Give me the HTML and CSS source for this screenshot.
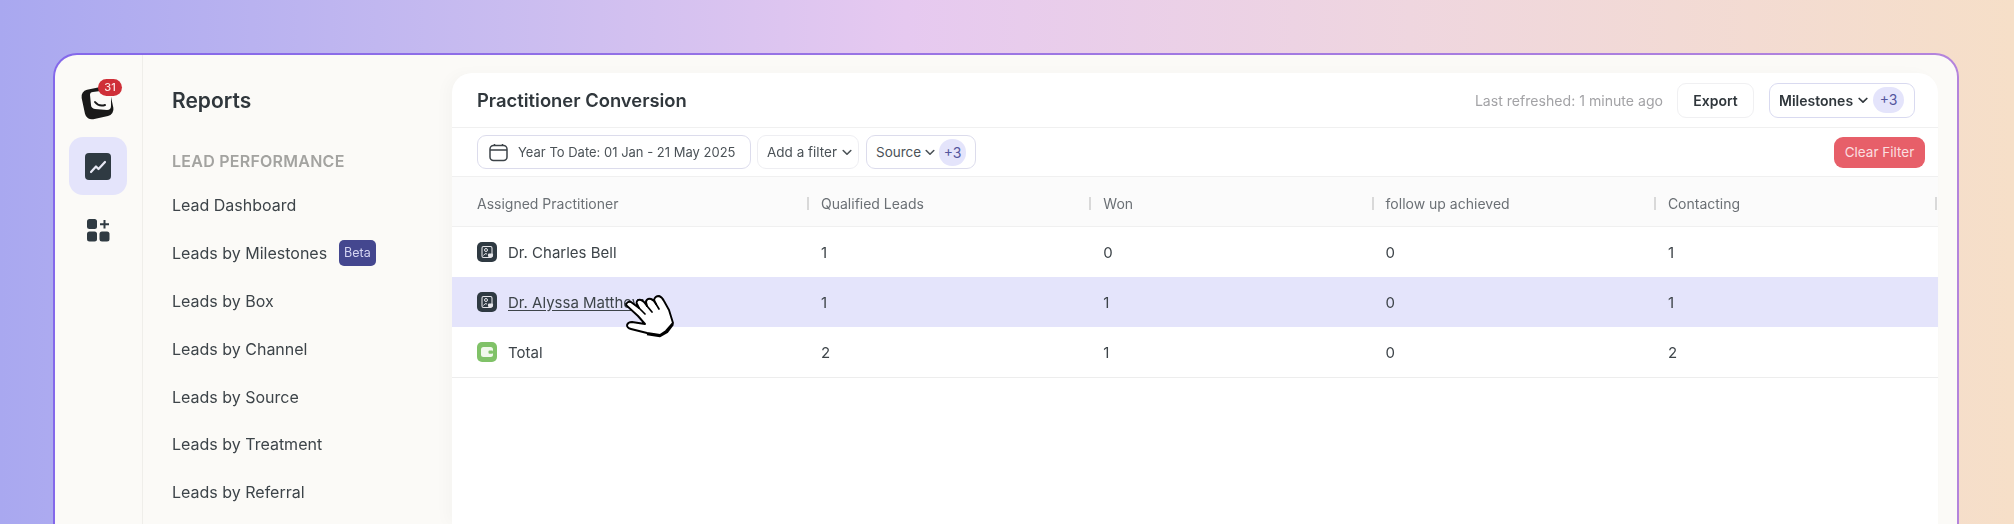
FILE: index.html
```html
<!DOCTYPE html>
<html lang="en">
<head>
    <meta charset="UTF-8">
    <title>Practitioner Conversion</title>
    <link rel="stylesheet" href="styles.css">
</head>
<body>

    <div class="window">
        <div class="rail">
            <div class="logo">
                <svg width="36" height="38" viewBox="0 0 36 38">
                    <rect x="3" y="4" width="29" height="30" rx="7" fill="#191919" transform="rotate(-12 17 19)"/>
                    <path d="M10 11 Q10 8 13 8 L28 6 Q31 6 31 9 L31 22 Q31 26 27 26 L15 25 Q11 24 11 21 Z" fill="#fbfaf7"/>
                    <path d="M15 18 Q19 23 25 21" fill="none" stroke="#191919" stroke-width="2" stroke-linecap="round"/>
                </svg>
                <span class="logo-badge">31</span>
            </div>
            <div class="rail-item active">
                <svg width="26" height="27" viewBox="0 0 26 27">
                    <rect width="26" height="27" rx="4" fill="#2f3a42"/>
                    <path d="M6 19 L11 13.5 L13.5 16 L20 9" fill="none" stroke="#e8e8f4" stroke-width="2.2" stroke-linecap="round" stroke-linejoin="round"/>
                </svg>
            </div>
            <div class="rail-item">
                <svg width="23" height="23" viewBox="0 0 23 23" fill="#2f3a42">
                    <rect x="0" y="0" width="10" height="10" rx="2.5"/>
                    <rect x="0" y="12.5" width="10" height="10" rx="2.5"/>
                    <rect x="12.5" y="12.5" width="10" height="10" rx="2.5"/>
                    <path d="M16.5 1 h2 v3.2 h3.5 v2 h-3.5 v3.3 h-2 v-3.3 h-3.5 v-2 h3.5 z"/>
                </svg>
            </div>
        </div>

        <div class="nav">
            <h2>Reports</h2>
            <div class="nav-group">LEAD PERFORMANCE</div>
            <a class="nav-item">Lead Dashboard</a>
            <a class="nav-item">Leads by Milestones <span class="beta">Beta</span></a>
            <a class="nav-item">Leads by Box</a>
            <a class="nav-item">Leads by Channel</a>
            <a class="nav-item">Leads by Source</a>
            <a class="nav-item">Leads by Treatment</a>
            <a class="nav-item">Leads by Referral</a>
        </div>

        <div class="panel">
            <div class="panel-head">
                <h1>Practitioner Conversion</h1>
                <div class="panel-actions">
                    <span class="refreshed">Last refreshed: 1 minute ago</span>
                    <button class="btn export">Export</button>
                    <button class="btn milestones">Milestones
                        <svg class="chev" width="10" height="7" viewBox="0 0 10 7"><path d="M1.2 1.5 L5 5.2 L8.8 1.5" fill="none" stroke="currentColor" stroke-width="1.7" stroke-linecap="round" stroke-linejoin="round"/></svg>
                        <span class="count">+3</span>
                    </button>
                </div>
            </div>

            <div class="filters">
                <button class="chip date">
                    <svg width="19" height="19" viewBox="0 0 19 19" fill="none" stroke="#3c4348" stroke-width="1.5">
                        <rect x="1" y="2.5" width="17" height="15" rx="3.5"/>
                        <path d="M1 7 H18 M5.5 1 V3 M13.5 1 V3"/>
                    </svg>
                    Year To Date: 01 Jan - 21 May 2025
                </button>
                <button class="chip add">Add a filter
                    <svg class="chev" width="10" height="7" viewBox="0 0 10 7"><path d="M1.2 1.5 L5 5.2 L8.8 1.5" fill="none" stroke="currentColor" stroke-width="1.6" stroke-linecap="round" stroke-linejoin="round"/></svg>
                </button>
                <button class="chip source">Source
                    <svg class="chev" width="10" height="7" viewBox="0 0 10 7"><path d="M1.2 1.5 L5 5.2 L8.8 1.5" fill="none" stroke="currentColor" stroke-width="1.6" stroke-linecap="round" stroke-linejoin="round"/></svg>
                    <span class="count">+3</span>
                </button>
                <button class="clear">Clear Filter</button>
            </div>

            <div class="row head">
                <div class="cell">Assigned Practitioner</div>
                <div class="cell">Qualified Leads</div>
                <div class="cell">Won</div>
                <div class="cell">follow up achieved</div>
                <div class="cell">Contacting</div>
            </div>

            <div class="row">
                <div class="cell">
                    <svg class="avatar" viewBox="0 0 20 20"><rect width="20" height="20" rx="5" fill="#2f3a42"/><rect x="5" y="4.5" width="10" height="11" rx="1.5" fill="none" stroke="#e6e6ea" stroke-width="1.1"/><circle cx="9" cy="8" r="1.5" fill="none" stroke="#e6e6ea" stroke-width="1"/><path d="M6.5 13.5 Q8 10.5 10 12" fill="none" stroke="#e6e6ea" stroke-width="1"/><rect x="11" y="11.5" width="5" height="3.5" rx="1" fill="#e6e6ea"/></svg>
                    Dr. Charles Bell
                </div>
                <div class="cell">1</div>
                <div class="cell">0</div>
                <div class="cell">0</div>
                <div class="cell">1</div>
            </div>
            <div class="row hover">
                <div class="cell">
                    <svg class="avatar" viewBox="0 0 20 20"><rect width="20" height="20" rx="5" fill="#2f3a42"/><rect x="5" y="4.5" width="10" height="11" rx="1.5" fill="none" stroke="#e6e6ea" stroke-width="1.1"/><circle cx="9" cy="8" r="1.5" fill="none" stroke="#e6e6ea" stroke-width="1"/><path d="M6.5 13.5 Q8 10.5 10 12" fill="none" stroke="#e6e6ea" stroke-width="1"/><rect x="11" y="11.5" width="5" height="3.5" rx="1" fill="#e6e6ea"/></svg>
                    <a class="name-link">Dr. Alyssa Matthews</a>
                    <svg class="hand" width="52" height="44" viewBox="-2 -2 52 44">
                        <path d="M1 9 Q2 5 6 6 L14 12 L11.5 7 Q12 3 16 4 Q19 5 22 10 L21 6 Q22 2 26 3 Q29 4 31 8 L29 4 Q30 0 34 0 Q37 1 39 5 L44 14 L48 27 L41 35 L35 39 L22 37 L6 33 Q2 32 2 29 Q3 26 7 26 L20 28 L13 20 Z" fill="#fff" stroke="#000" stroke-width="1.9" stroke-linejoin="round"/>
                        <path d="M14 12 L20 18 M22 10 L27 16 M31 8 L34 13" stroke="#000" stroke-width="1.7" stroke-linecap="round"/>
                        <path d="M22 38 L35 40 L42 36 L48 28" fill="none" stroke="#000" stroke-width="2.4" stroke-linejoin="round"/>
                    </svg>
                </div>
                <div class="cell">1</div>
                <div class="cell">1</div>
                <div class="cell">0</div>
                <div class="cell">1</div>
            </div>
            <div class="row total">
                <div class="cell">
                    <svg class="avatar" viewBox="0 0 20 20"><rect width="20" height="20" rx="5" fill="#80c268"/><rect x="4" y="5" width="12" height="10" rx="2.5" fill="#f1f8ec"/><rect x="11.5" y="8.5" width="4.5" height="3.2" rx="1" fill="#80c268"/></svg>
                    Total
                </div>
                <div class="cell">2</div>
                <div class="cell">1</div>
                <div class="cell">0</div>
                <div class="cell">2</div>
            </div>
        </div>
    </div>

</body>
</html>
```

FILE: styles.css
```css
*{
    box-sizing: border-box;
}
html, body{
    width: 100%;
    height: 100%;
    overflow: hidden;
    padding: 0;
    margin: 0;
}

body{
    padding: 53px 55px 0 53px;
    font-family: Inter, 'Noto Sans', sans-serif;
    color: #3a4146;
    background: linear-gradient(90deg, #a9a8f0 0%, #c9bcf0 25%, #e6c9f0 45%, #efd6df 70%, #f6dfc8 100%);
}

button{
    font-family: inherit;
    cursor: pointer;
    white-space: nowrap;
}
svg{
    flex: none;
}

.window{
    display: flex;
    height: 100%;
    background: linear-gradient(#fbfaf7, #fbfaf7) padding-box, linear-gradient(90deg, #8468ea, #b484dc) border-box;
    border: 2px solid transparent;
    border-bottom: 0;
    border-radius: 24px 24px 0 0;
    overflow: hidden;
    filter: blur(.35px);
}

.rail{
    width: 88px;
    flex: none;
    display: flex;
    flex-direction: column;
    align-items: center;
    padding-top: 29px;
    padding-right: 1px;
    border-right: 1px solid #efeeea;
}
.logo{
    position: relative;
    width: 36px;
    height: 38px;
    margin-bottom: 15px;
}
.logo-badge{
    position: absolute;
    top: -5px;
    left: 18px;
    width: 24px;
    height: 17px;
    border-radius: 9px;
    background: #cf2f38;
    color: #fbe4e4;
    font-size: 11px;
    font-weight: 500;
    line-height: 17px;
    text-align: center;
}
.rail-item{
    display: flex;
    align-items: center;
    justify-content: center;
    width: 58px;
    height: 58px;
    border-radius: 14px;
}
.rail-item.active{
    background: #e4e4fb;
    margin-bottom: 6px;
}

.nav{
    width: 309px;
    flex: none;
    padding: 0 0 0 29px;
}
.nav h2{
    margin: 33px 0 0;
    font-size: 21px;
    line-height: 26px;
    font-weight: 600;
    color: #30373c;
}
.nav-group{
    margin-top: 35px;
    margin-bottom: 8px;
    font-size: 16px;
    line-height: 24px;
    font-weight: 600;
    letter-spacing: .25px;
    color: #a3a3a0;
}
.nav-item{
    display: flex;
    align-items: center;
    gap: 12px;
    height: 47.9px;
    font-size: 16px;
    font-weight: 400;
    color: #3d4449;
}
.beta{
    padding: 0 5px;
    height: 26px;
    line-height: 26px;
    border-radius: 5px;
    background: #44478f;
    color: #d5d5f2;
    font-size: 12.5px;
}

.panel{
    flex: 1;
    margin: 18px 19px 0 0;
    background: #fff;
    border-radius: 20px 20px 0 0;
    box-shadow: -6px 0 14px rgba(0,0,0,.025);
    overflow: hidden;
}

.panel-head{
    display: flex;
    justify-content: space-between;
    align-items: center;
    height: 55px;
    padding: 0 23px 0 25px;
    border-bottom: 1px solid #f0f0f0;
}
.panel-head h1{
    margin: 0;
    font-size: 18.4px;
    font-weight: 600;
    color: #30373c;
}
.panel-actions{
    display: flex;
    align-items: center;
}
.refreshed{
    font-size: 14.1px;
    color: #a3a3a6;
    margin-right: 14px;
}
.btn{
    display: flex;
    align-items: center;
    gap: 5px;
    height: 35px;
    font-size: 14px;
    font-weight: 600;
    color: #30373c;
    background: #fff;
    border: 1px solid #f0f0f2;
    border-radius: 9px;
}
.export{
    width: 77px;
    justify-content: center;
    margin-right: 15px;
}
.milestones{
    width: 146px;
    padding: 0 9px;
    border-color: #d9daf0;
}
.count{
    display: inline-block;
    width: 31px;
    height: 26px;
    line-height: 26px;
    border-radius: 13px;
    background: #e4e4fb;
    color: #54569e;
    font-size: 14px;
    font-weight: 400;
    text-align: center;
}

.filters{
    display: flex;
    align-items: center;
    height: 49px;
    padding: 0 13px 0 25px;
    border-bottom: 1px solid #f0f0f0;
}
.chip{
    display: flex;
    align-items: center;
    height: 34px;
    font-size: 13.5px;
    color: #4b5257;
    background: #fff;
    border: 1px solid #eeeef2;
    border-radius: 9px;
}
.date{
    width: 274px;
    gap: 10px;
    padding: 0 11px;
    font-size: 13px;
    border-color: #dcdcec;
    margin-right: 6px;
}
.add{
    width: 102px;
    gap: 5px;
    padding: 0 9px;
    margin-right: 7px;
}
.source{
    width: 110px;
    gap: 4px;
    padding: 0 9px;
    border-color: #dcdcec;
}
.source .count{
    height: 27px;
    line-height: 27px;
}
.clear{
    margin-left: auto;
    width: 91px;
    height: 31px;
    font-size: 13.5px;
    color: #fbdfe0;
    background: #e75f69;
    border: 0;
    border-radius: 9px;
}

.row{
    display: grid;
    grid-template-columns: 355px 282.3px 282.3px 282.3px 282px;
    align-items: center;
    height: 50px;
    font-size: 15px;
    color: #3d4449;
}
.row.head{
    height: 50px;
    padding-top: 3px;
    background: #fbfbfb;
    border-bottom: 1px solid #f0f0f0;
    font-size: 14px;
    font-weight: 400;
    color: #6b7075;
}
.row.hover{
    background: #e4e4fb;
}
.row.total{
    border-bottom: 1px solid #ededed;
    height: 51px;
}
.cell{
    position: relative;
    display: flex;
    align-items: center;
    gap: 11px;
    padding-left: 14px;
    height: 100%;
}
.cell:first-child{
    padding-left: 25px;
}
.head .cell:not(:first-child)::before{
    content: "";
    width: 2px;
    height: 13px;
    background: #d9d9d9;
    margin-right: 1px;
    margin-left: -14px;
}
.head .cell:last-child::after{
    content: "";
    position: absolute;
    right: -1px;
    width: 2px;
    height: 13px;
    background: #d9d9d9;
}
.avatar{
    width: 20px;
    height: 20px;
    flex: none;
}
.name-link{
    text-decoration: underline;
    text-underline-offset: 2px;
}
.hand{
    position: absolute;
    left: 171px;
    top: 17px;
}
```
